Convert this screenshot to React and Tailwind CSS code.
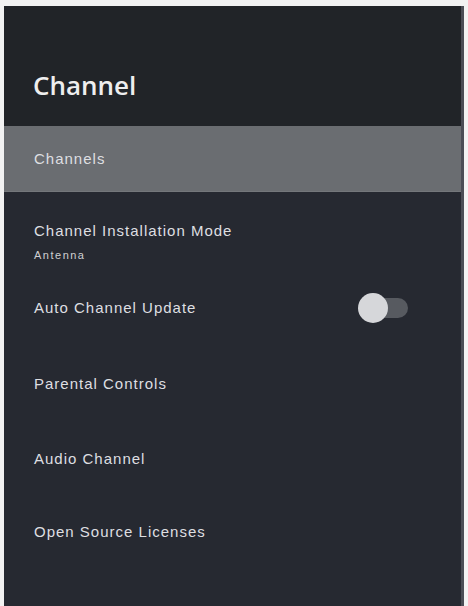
import React from "react";

const itemText = "text-[15px] tracking-[1px] text-[#dedfe1] leading-[18px]";

function Row({ h, children, className = "" }) {
  return (
    <div className={`flex items-center pl-[30px] pr-[53px] ${h} ${className}`}>
      {children}
    </div>
  );
}

export default function App() {
  return (
    <div
      className="w-[468px] h-[606px] bg-[#f2f2f2] pt-[6px] pl-[4px] overflow-hidden"
      style={{ fontFamily: '"Liberation Sans", Arial, sans-serif' }}
    >
      <div className="w-[460px] h-[600px] flex flex-col bg-[#262931] border-r-[3px] border-[#4a4d55]">
        <div className="h-[120px] bg-[#212428] flex items-end pl-[29px] pb-[28px]">
          <span
            className="text-[26px] font-semibold text-[#eeeeee] leading-none"
            style={{ fontFamily: '"Open Sans", "Noto Sans", sans-serif' }}
          >
            Channel
          </span>
        </div>
        <Row h="h-[66px]" className="bg-[#6a6d71] border-b border-[#74777b]">
          <span className={itemText}>Channels</span>
        </Row>
        <div className="h-[78px] flex flex-col pl-[30px] pt-[30px]">
          <span className={itemText}>Channel Installation Mode</span>
          <span className="mt-[9px] text-[11px] tracking-[1.5px] text-[#cfd0d2] leading-[12px]">
            Antenna
          </span>
        </div>
        <Row h="h-[75px]" className="justify-between">
          <span className={itemText}>Auto Channel Update</span>
          <div className="relative w-[50px] h-[30px] flex items-center justify-end">
            <div className="w-[38px] h-[20px] rounded-full bg-[#575a60]" />
            <div className="absolute left-0 top-0 w-[30px] h-[30px] rounded-full bg-[#d6d7da]" />
          </div>
        </Row>
        <Row h="h-[77px]">
          <span className={itemText}>Parental Controls</span>
        </Row>
        <Row h="h-[73px]">
          <span className={itemText}>Audio Channel</span>
        </Row>
        <Row h="h-[74px]">
          <span className={itemText}>Open Source Licenses</span>
        </Row>
      </div>
    </div>
  );
}
